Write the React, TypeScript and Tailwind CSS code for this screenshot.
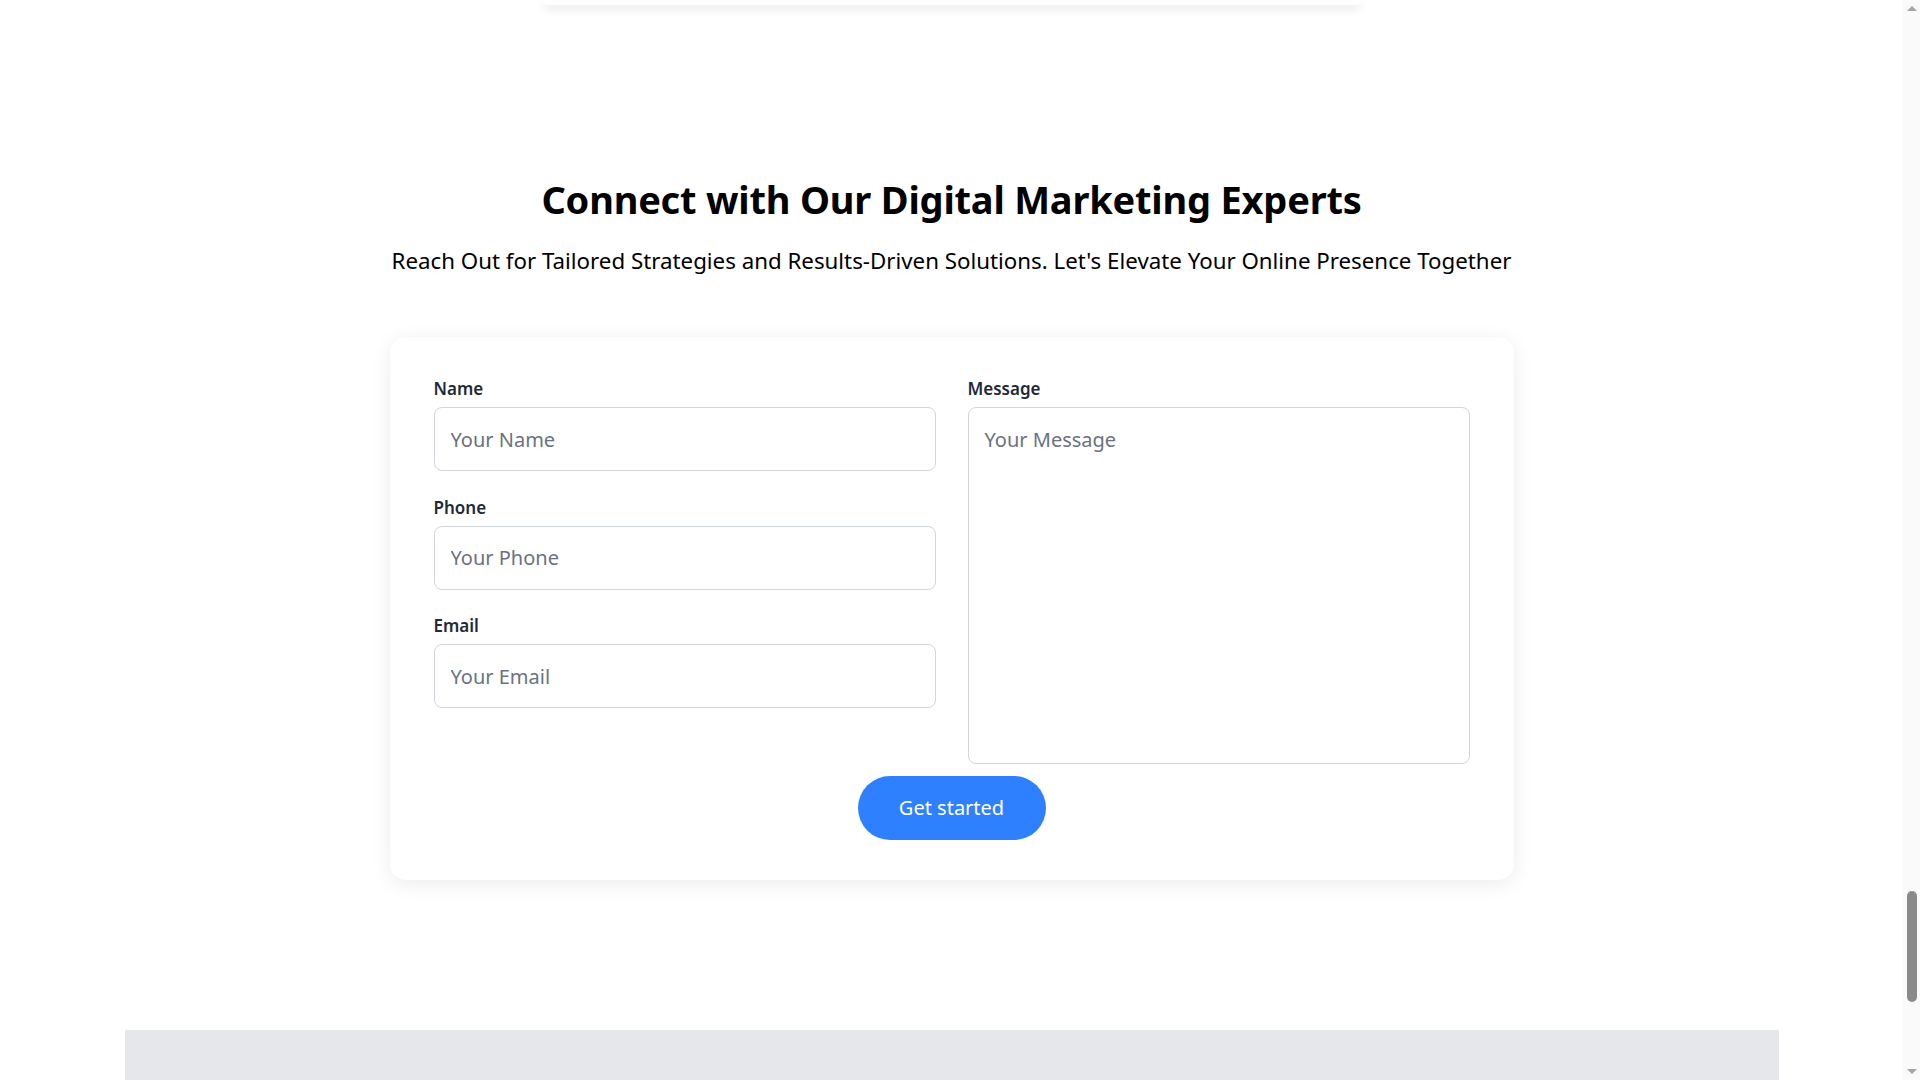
const Field = ({ label, placeholder }: { label: string; placeholder: string }) => (
  <div className="flex flex-col">
    <label className="mb-[6px] text-[17px] leading-6 font-semibold text-gray-800">{label}</label>
    <input
      type="text"
      placeholder={placeholder}
      className="h-16 w-full rounded-lg border border-gray-300 bg-white px-4 text-xl text-gray-800 placeholder:text-gray-500 outline-none"
    />
  </div>
);

const App: React.FC = () => {
  return (
    <div className="min-h-screen bg-white pr-[17px] font-['Noto_Sans','Open_Sans',sans-serif] text-black">
      {/* bottom of the previous section's card */}
      <div className="mx-auto h-[5px] w-[818px] rounded-b-2xl bg-white shadow-[0_4px_10px_rgba(0,0,0,0.12)]" />

      {/* Contact section */}
      <section className="flex flex-col items-center">
        <h2 className="mt-[174px] text-[38px] leading-10 font-bold tracking-[-0.2px]">
          Connect with Our Digital Marketing Experts
        </h2>
        <p className="mt-7 text-[22.3px] leading-7">
          Reach Out for Tailored Strategies and Results-Driven Solutions. Let's Elevate Your Online Presence Together
        </p>

        <div className="mt-[62px] w-[1124px] rounded-2xl bg-white px-11 pt-10 pb-10 shadow-[0_4px_20px_rgba(0,0,0,0.08)]">
          <div className="grid grid-cols-2 gap-x-8">
            <div className="flex flex-col gap-[24.5px]">
              <Field label="Name" placeholder="Your Name" />
              <Field label="Phone" placeholder="Your Phone" />
              <Field label="Email" placeholder="Your Email" />
            </div>
            <div className="flex flex-col">
              <label className="mb-[6px] text-[17px] leading-6 font-semibold text-gray-800">Message</label>
              <textarea
                placeholder="Your Message"
                className="h-[357px] w-full resize-none rounded-lg border border-gray-300 bg-white px-4 pt-[18px] text-xl leading-7 text-gray-800 placeholder:text-gray-500 outline-none"
              />
            </div>
          </div>
          <div className="mt-3 flex justify-center">
            <button className="h-16 w-[188px] rounded-full bg-[#2f80ff] text-xl text-white">Get started</button>
          </div>
        </div>
      </section>

      {/* Footer */}
      <footer className="mx-auto mt-[150px] h-[400px] w-[1654px] bg-gray-200" />

      {/* window scrollbar */}
      <div className="fixed top-0 right-0 flex h-screen w-[17px] flex-col items-center bg-[#fafafa]">
        <div className="mt-[6px] h-0 w-0 border-x-[5px] border-b-[5px] border-x-transparent border-b-[#a3a3a3]" />
        <div className="mt-[880px] h-[111px] w-[10px] rounded-full bg-[#8a8a8a]" />
        <div className="mt-auto mb-[6px] h-0 w-0 border-x-[5px] border-t-[5px] border-x-transparent border-t-[#a3a3a3]" />
      </div>
    </div>
  );
};

export default App;
